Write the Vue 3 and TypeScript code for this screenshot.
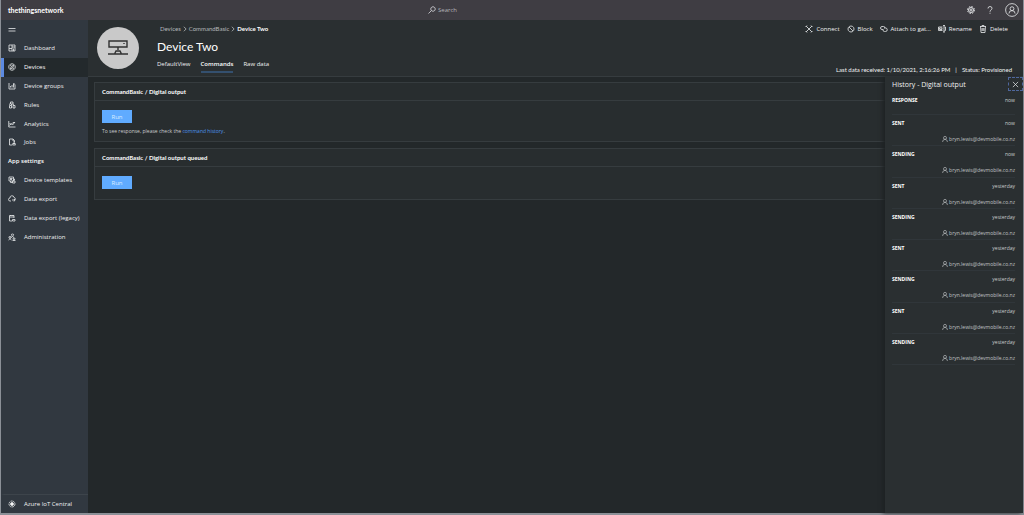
<script setup lang="ts">
import { ref } from 'vue'

interface NavItem {
  label: string
  icon: string
  heading?: boolean
  active?: boolean
}

interface HistoryItem {
  state: string
  time: string
  user?: string
}

const icons: Record<string, string> = {
  dashboard: 'M2 2h12v12H2zM8 2v12M2 9h6M8 6h6M11 9v5',
  devices: 'M8 1.5a6.5 6.5 0 1 0 .01 0M5 12l1-4 5-4-1 5zM4 6l3-2M9 12l3-2',
  groups: 'M2 2v12h12V5M5 11V8M8 11V6M11 11V3M10 4h4',
  rules: 'M5 2h5v4H5zM3 9h4v5H3zM10 9h4v5h-4zM7 6v3M10 6l2 3M2 7l3-2',
  analytics: 'M1.5 2v12H15M3 11l3-4 3 3 5-6M3 7l3 2 4-4h4',
  jobs: 'M8 14H3V2h7l3 3v4M10 2v4h3M9 11h6M12 9l3 5H9z',
  templates: 'M2 2h9v8H2zM4 5h5M4 7h4M5 10v3h4M11 6h2v3M9 10h5v4H9z',
  cloud: 'M6 12H4a3 3 0 0 1 0-6 4 4 0 0 1 8-1c3 0 3 4 2 5M8 10h6M12 8l2 2-2 3',
  legacy: 'M8 14H3V3h9v5M3 6h9M5 2v2M10 2v2M9 11h5v3H9z',
  admin: 'M9 2a2 2 0 1 0 .01 0M6 9q3-4 6 0M4 7a2 2 0 1 0 .01 0M1 14q3-5 6 0M12 10a2 2 0 1 0 .01 0M9 15h6',
  connect: 'M2 2l4 4M14 2l-4 4M2 14l4-4M14 14l-4-4M5 5l6 6M11 5l-6 6M1 4l3-3M12 1l3 3M1 12l3 3M15 12l-3 3',
  block: 'M8 2a6 6 0 1 0 .01 0M4 4l8 8',
  attach: 'M7 9H4a3 3 0 0 1 0-6h3a3 3 0 0 1 3 3M8 6h3a3.500 3.500 0 0 1 0 7H9a3 3 0 0 1-3-3',
  rename: 'M9 4H1v7h8M3 6h5v3H3zM10 1h4M12 1v13M10 14h4M13 4h2v7h-2',
  trash: 'M2 3h12M6 3V1h4v2M3 3l1 12h8l1-12M6 6v6M8 6v6M10 6v6',
}

const nav: NavItem[] = [
  { label: 'Dashboard', icon: 'dashboard' },
  { label: 'Devices', icon: 'devices', active: true },
  { label: 'Device groups', icon: 'groups' },
  { label: 'Rules', icon: 'rules' },
  { label: 'Analytics', icon: 'analytics' },
  { label: 'Jobs', icon: 'jobs' },
  { label: 'App settings', icon: '', heading: true },
  { label: 'Device templates', icon: 'templates' },
  { label: 'Data export', icon: 'cloud' },
  { label: 'Data export (legacy)', icon: 'legacy' },
  { label: 'Administration', icon: 'admin' },
]

const actions = [
  { label: 'Connect', icon: 'connect' },
  { label: 'Block', icon: 'block' },
  { label: 'Attach to gat...', icon: 'attach' },
  { label: 'Rename', icon: 'rename' },
  { label: 'Delete', icon: 'trash' },
]

const tabs = ['DefaultView', 'Commands', 'Raw data']
const activeTab = ref('Commands')

const email = 'bryn.lewis@devmobile.co.nz'
const history: HistoryItem[] = [
  { state: 'SENT', time: 'now', user: email },
  { state: 'SENDING', time: 'now', user: email },
  { state: 'SENT', time: 'yesterday', user: email },
  { state: 'SENDING', time: 'yesterday', user: email },
  { state: 'SENT', time: 'yesterday', user: email },
  { state: 'SENDING', time: 'yesterday', user: email },
  { state: 'SENT', time: 'yesterday', user: email },
  { state: 'SENDING', time: 'yesterday', user: email },
]
</script>

<template>
  <div class="app">
    <header class="topbar">
      <strong class="brand">thethingsnetwork</strong>
      <label class="search">
        <svg class="search-icon" viewBox="0 0 16 16"><path d="M10 1.500a4.500 4.500 0 1 0 .01 0M7 9l-6 6" /></svg>
        <input type="text" placeholder="Search" aria-label="Search" />
      </label>
      <div class="tools">
        <button type="button" aria-label="Settings">
          <svg class="gear" viewBox="0 0 16 16">
            <circle cx="8" cy="8" r="7" stroke-dasharray="3 2.500" /><circle cx="8" cy="8" r="5" /><circle cx="8" cy="8" r="2" />
          </svg>
        </button>
        <button type="button" aria-label="Help">
          <svg class="help" viewBox="0 0 16 16"><path d="M4 5q0-4 4-4t4 3.500q0 2-2 3.500-2 1.500-2 3.500M8 13.500v2" /></svg>
        </button>
        <button type="button" aria-label="Account">
          <svg class="account" viewBox="0 0 16 16">
            <circle cx="8" cy="8" r="7.300" /><circle cx="8" cy="6.500" r="2.200" /><path d="M4.500 12q0-3.300 3.500-3.300t3.500 3.300" />
          </svg>
        </button>
      </div>
    </header>

    <div class="body">
      <aside class="sidebar">
        <button type="button" class="menu" aria-label="Toggle navigation">
          <svg viewBox="0 0 16 16"><path d="M1 5h14M1 10h14" /></svg>
        </button>
        <nav class="nav">
          <template v-for="item in nav" :key="item.label">
            <h2 v-if="item.heading" class="nav-heading">{{ item.label }}</h2>
            <a v-else href="#" class="nav-item" :class="{ active: item.active }">
              <svg viewBox="0 0 16 16"><path :d="icons[item.icon]" /></svg>
              <span>{{ item.label }}</span>
            </a>
          </template>
        </nav>
        <a href="#" class="nav-item central">
          <svg viewBox="0 0 16 16">
            <circle cx="8" cy="8" r="6" stroke-dasharray="4 1" /><circle class="dot" cx="8" cy="8" r="3" />
          </svg>
          <span>Azure IoT Central</span>
        </a>
      </aside>

      <main class="main">
        <section class="device">
          <div class="avatar">
            <svg viewBox="0 0 20 16">
              <path d="M1 1h18v6H1zM10 7v3M7 13l1-2h4l1 2v1H7zM0 14h20M16 3v1" />
            </svg>
          </div>
          <div class="device-info">
            <nav class="crumbs" aria-label="Breadcrumb">
              <a href="#">Devices</a>
              <svg viewBox="0 0 8 16"><path d="M1 2l6 6-6 6" /></svg>
              <a href="#">CommandBasic</a>
              <svg viewBox="0 0 8 16"><path d="M1 2l6 6-6 6" /></svg>
              <strong>Device Two</strong>
            </nav>
            <h1>Device Two</h1>
            <div class="tabs" role="tablist">
              <button
                v-for="tab in tabs"
                :key="tab"
                type="button"
                role="tab"
                :aria-selected="tab === activeTab"
                :class="{ selected: tab === activeTab }"
                @click="activeTab = tab"
              >{{ tab }}</button>
            </div>
          </div>
          <div class="device-side">
            <div class="actions">
              <button v-for="action in actions" :key="action.label" type="button">
                <svg viewBox="0 0 16 16"><path :d="icons[action.icon]" /></svg>
                <span>{{ action.label }}</span>
              </button>
            </div>
            <p class="status">
              <span>Last data received: 1/10/2021, 2:16:26 PM</span><span>|</span><span>Status: Provisioned</span>
            </p>
          </div>
        </section>

        <div class="commands">
          <section class="card">
            <h3>CommandBasic / Digital output</h3>
            <div class="card-body">
              <button type="button" class="run">Run</button>
              <p>To see response, please check the <a href="#">command history</a>.</p>
            </div>
          </section>
          <section class="card">
            <h3>CommandBasic / Digital output queued</h3>
            <div class="card-body">
              <button type="button" class="run">Run</button>
            </div>
          </section>
        </div>
      </main>
    </div>

    <aside class="panel">
      <header class="panel-head">
        <h2>History - Digital output</h2>
        <button type="button" aria-label="Close">
          <svg viewBox="0 0 16 16"><path d="M2 2l12 12M14 2L2 14" /></svg>
        </button>
      </header>
      <div class="response"><strong>RESPONSE</strong><span>now</span></div>
      <ul class="history">
        <li v-for="(entry, i) in history" :key="i">
          <div class="entry"><strong>{{ entry.state }}</strong><span>{{ entry.time }}</span></div>
          <div class="user">
            <svg viewBox="0 0 16 16"><circle cx="8" cy="5" r="4" /><path d="M1.500 16q0-7 6.500-7t6.500 7" /></svg>
            <span>{{ entry.user }}</span>
          </div>
        </li>
      </ul>
    </aside>
  </div>
</template>

<style>
body {
  margin: 0;
  background: #23282a;
}
</style>

<style scoped>
* {
  box-sizing: border-box;
}
.app {
  position: relative;
  display: flex;
  flex-direction: column;
  min-height: 100vh;
  border: solid #8b9097;
  border-width: 0 1px 2px 1px;
  background: #23282a;
  color: #f0f1f2;
  font: 6px/8px "Open Sans", "Noto Sans", sans-serif;
}
button,
input {
  margin: 0;
  padding: 0;
  border: 0;
  background: none;
  color: inherit;
  font: inherit;
}
a {
  color: inherit;
  text-decoration: none;
}
h1,
h2,
h3,
p,
ul {
  margin: 0;
  padding: 0;
}
svg {
  display: block;
  flex: none;
  width: 8px;
  height: 8px;
  fill: none;
  stroke: #dfe1e3;
  stroke-width: 1.7;
}

.topbar {
  display: grid;
  grid-template-columns: 1fr 171px 1fr;
  align-items: center;
  height: 20px;
  padding: 0 4px 0 7px;
  background: #3f3d43;
}
.brand {
  font-size: 7px;
  font-weight: 700;
  font-family: Lato, sans-serif;
  color: #fff;
}
.search {
  display: flex;
  align-items: center;
  gap: 2px;
}
.search-icon {
  stroke: #d0d0d4;
}
.search input {
  width: 100%;
  outline: 0;
}
.search input::placeholder {
  color: #b5b4b9;
  opacity: 1;
}
.tools {
  display: flex;
  align-items: center;
  justify-content: flex-end;
  gap: 11px;
}
.gear {
  stroke-width: 2;
}
.account {
  width: 14px;
  height: 14px;
  stroke-width: 1;
}

.body {
  display: flex;
  flex: 1;
}
.sidebar {
  display: flex;
  flex-direction: column;
  width: 87px;
  background: #313840;
}
.menu {
  height: 19px;
  padding-left: 7px;
}
.nav {
  display: grid;
  grid-auto-rows: 1fr;
  height: 207px;
}
.nav-item {
  display: flex;
  align-items: center;
  gap: 8px;
  padding-left: 4px;
  border-left: 3px solid transparent;
}
.nav-item.active {
  border-color: #5c8ae0;
  background: #23292c;
  color: #fff;
}
.nav-heading {
  align-self: center;
  padding-left: 7px;
  font-size: 6px;
  font-weight: 600;
  color: #fff;
}
.central {
  height: 19px;
  margin-top: auto;
  border-top: 1px solid #3d444b;
}
.dot {
  fill: #fff;
}

.main {
  flex: 1;
  min-width: 0;
}
.device {
  display: flex;
  height: 57px;
  padding: 0 11px 0 9px;
  border-bottom: 1px solid #363c3f;
  background: #2a2f31;
}
.avatar {
  display: grid;
  place-items: center;
  width: 42px;
  height: 42px;
  margin: 7px 18px 0 0;
  border-radius: 50%;
  background: #c9c9c9;
}
.avatar svg {
  width: 20px;
  height: 16px;
  stroke: #303030;
  stroke-width: 1.4;
}
.device-info {
  padding-top: 5px;
}
.crumbs {
  display: flex;
  align-items: center;
  gap: 2px;
  padding-left: 3px;
  font-family: Lato, sans-serif;
  color: #b4b7b9;
}
.crumbs svg {
  width: 4px;
  height: 6px;
}
.crumbs strong {
  font-weight: 700;
  color: #fff;
}
h1 {
  margin-top: 6px;
  font: 400 12px/16px Lato, sans-serif;
  color: #fff;
}
.tabs {
  display: flex;
  gap: 10px;
  margin-top: 4px;
}
.tabs button {
  height: 14px;
  padding-bottom: 3px;
  border-bottom: 2px solid transparent;
}
.tabs .selected {
  border-color: #34506f;
  font-weight: 600;
  color: #fff;
}
.device-side {
  display: flex;
  flex: 1;
  flex-direction: column;
  align-items: flex-end;
  justify-content: space-between;
  padding: 5px 0 2px;
}
.actions {
  display: flex;
  gap: 7px;
  padding-right: 4px;
}
.actions button {
  display: flex;
  align-items: center;
  gap: 3px;
}
.status {
  display: flex;
  gap: 5px;
  font-family: Lato, sans-serif;
}

.commands {
  display: grid;
  gap: 6px;
  padding: 5px 8px 0 6px;
}
.card {
  border: 1px solid #363c3f;
  background: #282d2f;
}
.card h3 {
  padding: 5px 7px 4px;
  border-bottom: 1px solid #363c3f;
  font: 700 6px/8px Lato, sans-serif;
  color: #fff;
}
.card-body {
  padding: 9px 7px 10px;
}
.card-body p {
  margin-top: 4px;
  margin-bottom: -4px;
  font-size: 5px;
  color: #c9cccd;
}
.card-body a {
  color: #4c95ee;
}
.run {
  display: block;
  width: 30px;
  height: 13px;
  background: #60abff;
  color: #d9ebff;
}

.panel {
  position: absolute;
  top: 77px;
  right: 0;
  bottom: 0;
  width: 138px;
  padding: 0 8px 0 7px;
  background: #2a2f31;
  box-shadow: -2px 0 4px #1d2123;
}
.panel-head {
  display: flex;
  align-items: center;
  justify-content: space-between;
  height: 14px;
  margin-right: -8px;
}
.panel-head h2 {
  padding-top: 2px;
  font-size: 7px;
  font-weight: 400;
}
.panel-head button {
  display: grid;
  place-items: center;
  width: 15px;
  height: 14px;
  border: 1px dashed #4f679d;
}
.panel-head svg {
  width: 7px;
  height: 7px;
}
.response {
  height: 23px;
  padding-top: 5px;
}
.response,
.entry {
  display: flex;
  justify-content: space-between;
  font-size: 5px;
  color: #c9cccd;
}
.response strong,
.entry strong {
  font-weight: 700;
  color: #fff;
}
.history {
  display: grid;
  grid-auto-rows: 1fr;
  height: 251px;
  border-bottom: 1px solid #30363a;
  list-style: none;
}
.history li {
  padding-top: 4px;
  border-top: 1px solid #30363a;
}
.user {
  display: flex;
  align-items: center;
  justify-content: flex-end;
  gap: 1px;
  margin-top: 8px;
  font-size: 5px;
  color: #c0c3c5;
}
.user svg {
  width: 6px;
  height: 6px;
  stroke: #c0c3c5;
}
</style>
